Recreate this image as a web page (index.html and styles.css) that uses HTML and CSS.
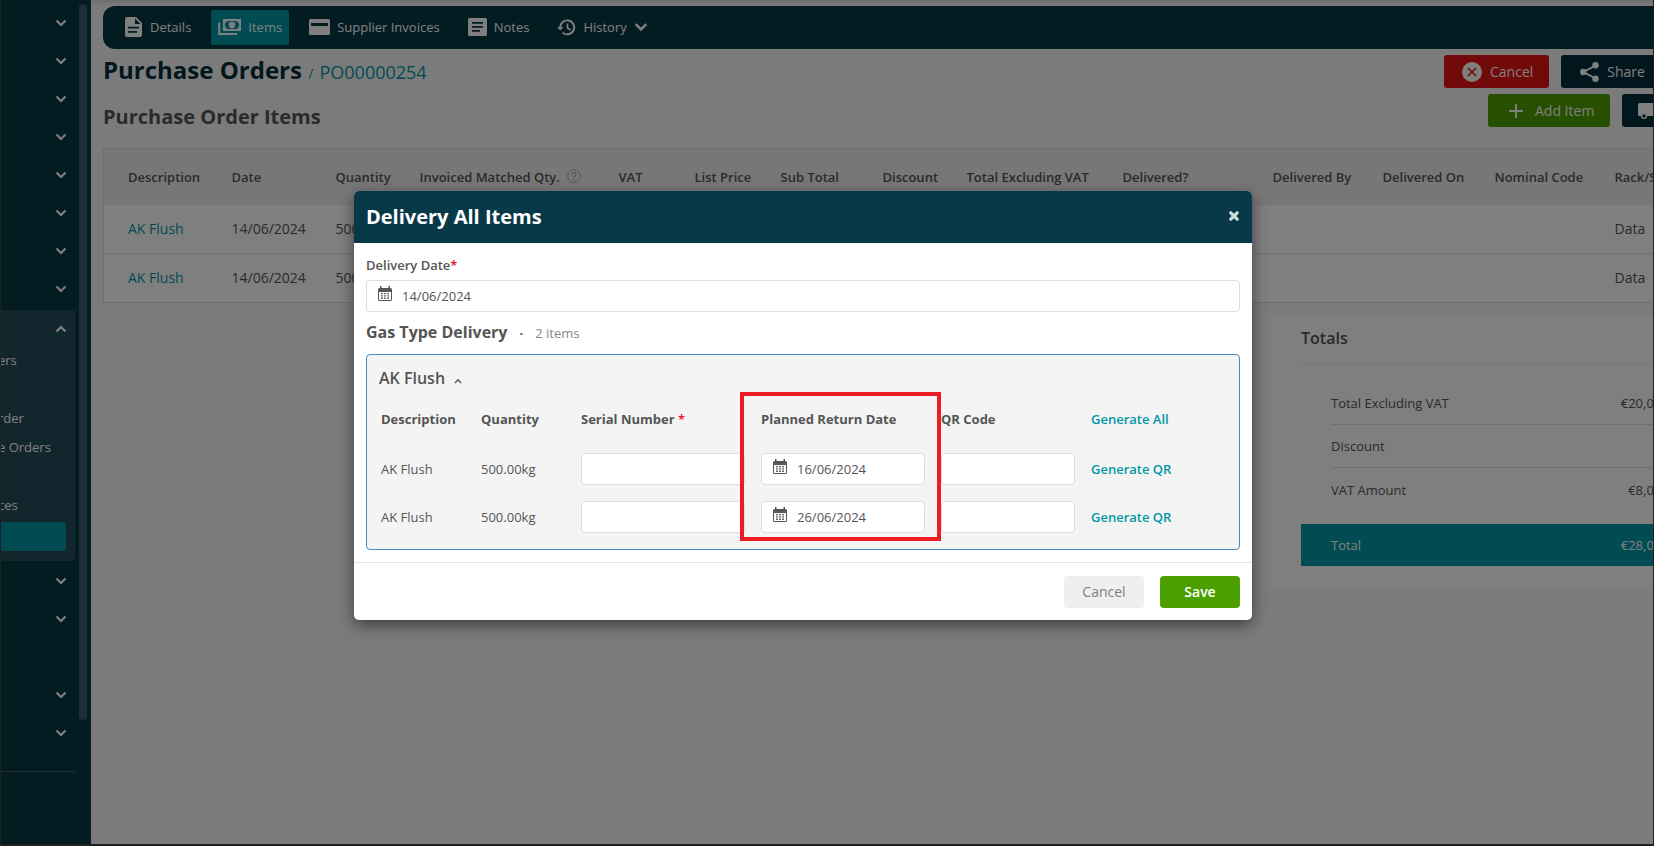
FILE: index.html
```html
<!DOCTYPE html>
<html lang="en">
<head>
<meta charset="utf-8">
<title>Purchase Orders</title>
<link rel="stylesheet" href="styles.css">
</head>
<body>
<svg class="defs" aria-hidden="true">
  <symbol id="chev" viewBox="0 0 12 8"><path d="M1.500 1.500 6 6l4.500-4.500" fill="none" stroke="currentColor" stroke-width="2.200"/></symbol>
  <symbol id="cal" viewBox="0 0 14 16"><path fill="currentColor" fill-rule="evenodd" d="M2 0h1.500v2h7V0H12v2h.5A1.500 1.500 0 0 1 14 3.500v10a1.500 1.500 0 0 1-1.500 1.500h-11A1.500 1.500 0 0 1 0 13.500v-10A1.500 1.500 0 0 1 1.500 2H2zM1 6v8h12V6z"/><path fill="currentColor" d="M3 7h1.800v1.300H3zM6.100 7h1.800v1.300H6.100zM9.200 7H11v1.300H9.200zM3 9.300h1.800v1.300H3zM6.100 9.300h1.800v1.300H6.100zM9.200 9.300H11v1.300H9.200zM3 11.600h1.800v1.300H3zM6.100 11.600h1.800v1.300H6.100zM9.200 11.600H11v1.300H9.200z"/></symbol>
</svg>
<div class="app">
  <nav class="sidebar" aria-label="Main menu">
    <div class="menu">
      <button class="menu-row" aria-label="Section 1"><svg class="chev"><use href="#chev"/></svg></button>
      <button class="menu-row" aria-label="Section 2"><svg class="chev"><use href="#chev"/></svg></button>
      <button class="menu-row" aria-label="Section 3"><svg class="chev"><use href="#chev"/></svg></button>
      <button class="menu-row" aria-label="Section 4"><svg class="chev"><use href="#chev"/></svg></button>
      <button class="menu-row" aria-label="Section 5"><svg class="chev"><use href="#chev"/></svg></button>
      <button class="menu-row" aria-label="Section 6"><svg class="chev"><use href="#chev"/></svg></button>
      <button class="menu-row" aria-label="Section 7"><svg class="chev"><use href="#chev"/></svg></button>
      <button class="menu-row" aria-label="Section 8"><svg class="chev"><use href="#chev"/></svg></button>
      <div class="menu-group">
        <button class="menu-row" aria-label="Section 9"><svg class="chev up"><use href="#chev"/></svg></button>
        <ul class="submenu">
          <li><a href="#">ers</a></li>
          <li></li>
          <li><a href="#">rder</a></li>
          <li><a href="#">e Orders</a></li>
          <li></li>
          <li><a href="#">ces</a></li>
          <li class="current"></li>
        </ul>
      </div>
      <button class="menu-row" aria-label="Section 10"><svg class="chev"><use href="#chev"/></svg></button>
      <button class="menu-row" aria-label="Section 11"><svg class="chev"><use href="#chev"/></svg></button>
      <div class="menu-row"></div>
      <button class="menu-row" aria-label="Section 12"><svg class="chev"><use href="#chev"/></svg></button>
      <button class="menu-row" aria-label="Section 13"><svg class="chev"><use href="#chev"/></svg></button>
      <hr class="menu-rule">
    </div>
    <div class="scroll-thumb"></div>
  </nav>

  <main class="main">
    <nav class="tabs" aria-label="Order sections">
      <a class="tab" href="#"><svg width="18" height="20" viewBox="0 0 18 20"><path fill="currentColor" fill-rule="evenodd" d="M2 0h9l6 6v12a2 2 0 0 1-2 2H2a2 2 0 0 1-2-2V2a2 2 0 0 1 2-2zM10 1.500V7h5.500zM3 9.700v1.800h11V9.700zM3 14v1.800h9V14z"/></svg>Details</a>
      <a class="tab active" href="#"><svg width="24" height="18" viewBox="0 0 24 18"><path fill="currentColor" fill-rule="evenodd" d="M5 1h18v12H5zM9 3a2.500 2.500 0 0 1-2 2v4a2.500 2.500 0 0 1 2 2h10a2.500 2.500 0 0 1 2-2V5a2.500 2.500 0 0 1-2-2z"/><circle cx="14" cy="7" r="3.200" fill="currentColor"/><path d="M1.200 4.500V16H19" fill="none" stroke="currentColor" stroke-width="2"/></svg>Items</a>
      <a class="tab" href="#"><svg width="21" height="16" viewBox="0 0 21 16"><path fill="currentColor" fill-rule="evenodd" d="M1.500 0h18A1.500 1.500 0 0 1 21 1.500v13a1.500 1.500 0 0 1-1.500 1.500h-18A1.500 1.500 0 0 1 0 14.500v-13A1.500 1.500 0 0 1 1.500 0zM2 4v3h17V4z"/></svg>Supplier Invoices</a>
      <a class="tab" href="#"><svg width="19" height="18" viewBox="0 0 19 18"><path fill="currentColor" fill-rule="evenodd" d="M1.500 0h16A1.500 1.500 0 0 1 19 1.500v15a1.500 1.500 0 0 1-1.500 1.500h-16A1.500 1.500 0 0 1 0 16.500v-15A1.500 1.500 0 0 1 1.500 0zM4 4v1.800h11V4zM4 8v1.800h11V8zM4 12v1.800h8V12z"/></svg>Notes</a>
      <a class="tab" href="#"><svg width="19" height="17" viewBox="0 0 19 17"><path d="M3.200 9A7 7 0 1 1 5.500 13.600" fill="none" stroke="currentColor" stroke-width="1.900"/><path d="M0 8h6.400L3.200 11.500z" fill="currentColor"/><path d="M10.500 4.500V9l3.200 2" fill="none" stroke="currentColor" stroke-width="1.600"/></svg>History<svg class="tab-chev"><use href="#chev"/></svg></a>
    </nav>

    <header class="title-row">
      <h1 class="title">Purchase Orders <span class="slash">/</span> <a href="#">PO00000254</a></h1>
      <div class="actions">
        <button class="btn danger"><svg width="20" height="20" viewBox="0 0 20 20"><path fill="currentColor" fill-rule="evenodd" d="M10 0a10 10 0 1 1 0 20 10 10 0 0 1 0-20zM6.300 5.200 5.200 6.300 8.900 10l-3.700 3.700 1.100 1.100L10 11.100l3.700 3.700 1.100-1.100L11.100 10l3.700-3.700-1.100-1.100L10 8.900z"/></svg>Cancel</button>
        <button class="btn dark"><svg width="20" height="20" viewBox="0 0 20 20"><path d="M16.500 3.500 4.500 10l12 6.500" fill="none" stroke="currentColor" stroke-width="1.900"/><g fill="currentColor"><circle cx="16.500" cy="3.300" r="3.200"/><circle cx="4.300" cy="10" r="3.200"/><circle cx="16.500" cy="16.700" r="3.200"/></g></svg>Share</button>
      </div>
    </header>
    <div class="title-row">
      <h2 class="subtitle">Purchase Order Items</h2>
      <div class="actions narrow">
        <button class="btn success"><svg width="16" height="16" viewBox="0 0 16 16"><path d="M8 1v14M1 8h14" stroke="currentColor" stroke-width="2"/></svg>Add Item</button>
        <button class="btn dark truck" aria-label="Deliver"><svg width="24" height="18" viewBox="0 0 24 18"><path fill="currentColor" d="M1.500 1H16v3h4l4 5v5H1.500A1.500 1.500 0 0 1 0 12.500v-10A1.500 1.500 0 0 1 1.500 1z"/><circle cx="6" cy="14" r="2.400" fill="#042e3b" stroke="currentColor" stroke-width="1.400"/><circle cx="19" cy="14" r="2.400" fill="#042e3b" stroke="currentColor" stroke-width="1.400"/></svg></button>
      </div>
    </div>

    <table class="items">
      <colgroup><col class="w104"><col class="w104"><col class="w84"><col class="w199"><col class="w76"><col class="w86"><col class="w102"><col class="w84"><col class="w156"><col class="w150"><col class="w110"><col class="w112"><col class="w120"><col class="w104"></colgroup>
      <thead><tr><th>Description</th><th>Date</th><th>Quantity</th><th>Invoiced Matched Qty.<svg class="help" viewBox="0 0 14 14"><circle cx="7" cy="7" r="6.300" fill="none" stroke="currentColor"/><path d="M5 5.500a2 2 0 1 1 2.900 1.800q-.9.500-.9 1.400M7 9.800v1.300" fill="none" stroke="currentColor" stroke-width="1.200"/></svg></th><th>VAT</th><th>List Price</th><th>Sub Total</th><th>Discount</th><th>Total Excluding VAT</th><th>Delivered?</th><th>Delivered By</th><th>Delivered On</th><th>Nominal Code</th><th>Rack/Shelf</th></tr></thead>
      <tbody>
        <tr><td><a href="#">AK Flush</a></td><td>14/06/2024</td><td>500.00</td><td></td><td></td><td></td><td></td><td></td><td></td><td></td><td></td><td></td><td></td><td>Data</td></tr>
        <tr><td><a href="#">AK Flush</a></td><td>14/06/2024</td><td>500.00</td><td></td><td></td><td></td><td></td><td></td><td></td><td></td><td></td><td></td><td></td><td>Data</td></tr>
      </tbody>
    </table>

    <section class="totals">
      <h3>Totals</h3>
      <dl>
        <div class="sum"><dt>Total Excluding VAT</dt><dd>€20,000.00</dd></div>
        <div class="sum"><dt>Discount</dt><dd></dd></div>
        <div class="sum"><dt>VAT Amount</dt><dd>€8,000.00</dd></div>
        <div class="grand"><dt>Total</dt><dd>€28,000.00</dd></div>
      </dl>
    </section>
  </main>

  <div class="overlay">
    <form class="modal" role="dialog" aria-labelledby="dlg-title">
      <header class="modal-head">
        <h2 id="dlg-title">Delivery All Items</h2>
        <button type="button" class="close" aria-label="Close"><svg width="12" height="12" viewBox="0 0 12 12"><path d="M2.800 2.800l6.400 6.400M9.200 2.800 2.800 9.200" stroke="currentColor" stroke-width="3.200" stroke-linecap="round"/></svg></button>
      </header>
      <div class="modal-body">
        <label class="label" for="ddate">Delivery Date<span class="req">*</span></label>
        <div class="date"><svg class="cal"><use href="#cal"/></svg><input id="ddate" type="text" value="14/06/2024"></div>
        <div class="group-head"><h3>Gas Type Delivery</h3><span class="dot">·</span><span class="count">2 items</span></div>
        <section class="panel">
          <h4>AK Flush<svg class="mini" viewBox="0 0 8 6"><path d="M1 5 4 1.800 7 5" fill="none" stroke="currentColor" stroke-width="1.300"/></svg></h4>
          <table class="lines">
            <colgroup><col class="w100"><col class="w100"><col class="w180"><col class="w180"><col class="w150"><col></colgroup>
            <thead><tr><th>Description</th><th>Quantity</th><th>Serial Number <span class="req">*</span></th><th>Planned Return Date</th><th>QR Code</th><th><a href="#">Generate All</a></th></tr></thead>
            <tbody>
              <tr><td>AK Flush</td><td>500.00kg</td><td><input class="box" type="text" aria-label="Serial Number 1"></td><td><div class="date"><svg class="cal"><use href="#cal"/></svg><input type="text" value="16/06/2024" aria-label="Planned Return Date 1"></div></td><td><input class="box" type="text" aria-label="QR Code 1"></td><td><a href="#">Generate QR</a></td></tr>
              <tr><td>AK Flush</td><td>500.00kg</td><td><input class="box" type="text" aria-label="Serial Number 2"></td><td><div class="date"><svg class="cal"><use href="#cal"/></svg><input type="text" value="26/06/2024" aria-label="Planned Return Date 2"></div></td><td><input class="box" type="text" aria-label="QR Code 2"></td><td><a href="#">Generate QR</a></td></tr>
            </tbody>
          </table>
          <div class="highlight"></div>
        </section>
      </div>
      <footer class="modal-foot">
        <button type="button" class="foot-btn plain">Cancel</button>
        <button type="submit" class="foot-btn save">Save</button>
      </footer>
    </form>
  </div>
</div>
</body>
</html>
```
FILE: styles.css
```css
* { box-sizing: border-box; }
body {
  margin: 0;
  font-family: "Open Sans", "Noto Sans", sans-serif;
  font-size: 14px;
  line-height: 20px;
  color: #555;
}
h1, h2, h3, h4, dl, dd, ul { margin: 0; padding: 0; }
button, input { font: inherit; color: inherit; }
button { border: 0; padding: 0; background: none; cursor: pointer; }
a { color: #0098a4; text-decoration: none; }
table { border-collapse: collapse; table-layout: fixed; }
th, td { padding: 0; text-align: left; }
.defs { position: absolute; width: 0; height: 0; }

.app {
  position: relative;
  display: flex;
  height: 100vh;
  overflow: hidden;
  border: 1px solid #231f20;
  border-width: 0 1px 2px;
  background: #f7f7f7;
}

/* Sidebar */
.sidebar {
  display: flex;
  gap: 4px;
  flex: 0 0 90px;
  padding-top: 4px;
  background: #053845;
  overflow: hidden;
}
.menu { flex: 0 0 74px; color: #fff; }
.menu-row {
  display: flex;
  align-items: center;
  justify-content: flex-end;
  width: 100%;
  height: 38px;
  padding-right: 8px;
}
.chev { width: 12px; height: 8px; }
.up { transform: rotate(180deg); }
.menu-group {
  margin: 2px 0 1px;
  padding-bottom: 10px;
  border-radius: 0 3px 3px 0;
  background: #224e5a;
}
.submenu { list-style: none; }
.submenu li { height: 29px; font-size: 13px; line-height: 25px; }
.submenu a { margin-left: -3px; color: #fff; font-weight: 500; white-space: nowrap; }
.submenu .current { margin-right: 9px; border-radius: 0 3px 3px 0; background: #0098a4; }
.menu-rule { height: 1px; margin: 19px 0 0; border: 0; background: #3a5e6a; }
.scroll-thumb { width: 8px; height: 716px; border-radius: 4px; background: #3a5e6a; }

/* Page */
.main { flex: 1; min-width: 0; padding: 6px 0 0 12px; overflow: hidden; background: linear-gradient(#dedede, #f7f7f7 6px); }
.tabs {
  display: flex;
  align-items: center;
  height: 43px;
  padding: 0 0 1px 14px;
  border-radius: 12px 0 0 12px;
  background: #053845;
}
.tab {
  display: flex;
  align-items: center;
  gap: 7px;
  height: 35px;
  margin-right: 12px;
  padding: 0 8px;
  border-radius: 2px;
  color: #fff;
  font-size: 13px;
}
.tab.active { gap: 6px; padding: 0 7px; background: #0098a4; }
.tab-chev { width: 14px; height: 10px; }

.title-row { display: flex; align-items: center; justify-content: space-between; height: 39px; margin-top: 3px; }
.title-row + .title-row { margin-top: 0; }
.title { padding-top: 1px; color: #042e3b; font-size: 24px; line-height: 32px; font-weight: 700; }
.title a { font-size: 18px; font-weight: 500; }
.slash { color: #0098a4; font-size: 14px; font-weight: 400; }
.subtitle { font-size: 20px; line-height: 28px; font-weight: 700; padding-top: 13px; }
.actions { display: flex; gap: 12px; flex: 0 0 209px; min-width: 0; }
.actions.narrow { flex-basis: 165px; }
.btn {
  display: flex;
  flex: none;
  align-items: center;
  gap: 8px;
  height: 33px;
  padding: 0 16px 0 18px;
  border-radius: 3px;
  color: #fff;
}
.danger { background: #e41414; }
.dark { background: #042e3b; }
.success { background: #4c9f00; gap: 11px; padding-left: 20px; }
.truck { padding-left: 16px; }

.items { width: 1591px; margin-top: 18px; border: 1px solid #dedede; background: #fff; }
.items thead { background: #efefef; }
.items th { height: 56px; padding-left: 24px; font-size: 13px; font-weight: 600; white-space: nowrap; }
.items td { height: 49px; padding-left: 24px; border-bottom: 1px solid #dedede; }
.help { width: 14px; height: 14px; margin-left: 7px; vertical-align: -1px; color: #aaa; }
.w76 { width: 76px; } .w84 { width: 84px; } .w86 { width: 86px; } .w100 { width: 100px; }
.w102 { width: 102px; } .w104 { width: 104px; } .w110 { width: 110px; } .w112 { width: 112px; }
.w120 { width: 120px; } .w150 { width: 150px; } .w156 { width: 156px; } .w180 { width: 180px; } .w199 { width: 199px; }

.totals {
  width: 480px;
  margin: 12px -96px 0 auto;
  padding: 0 32px 24px;
  border-radius: 12px;
  background: #fff;
  font-size: 13px;
}
.totals h3 { padding: 13px 0 14px; margin-bottom: 18px; border-bottom: 1px solid #f0f0f0; font-size: 16px; line-height: 21px; font-weight: 600; }
.sum, .grand { display: flex; justify-content: space-between; align-items: center; }
.sum { height: 43px; margin: 0 30px; border-bottom: 1px solid #dedede; }
.sum:nth-child(3) { border: 0; margin-bottom: 13px; }
.grand { height: 42px; padding: 0 30px; background: #0098a4; color: #fff; }

/* Dialog */
.overlay {
  position: absolute;
  inset: 0;
  display: flex;
  justify-content: center;
  align-items: flex-start;
  padding: 191px 48px 0 0;
  background: rgba(0, 0, 0, .5);
}
.modal { width: 898px; border-radius: 5px; overflow: hidden; background: #fff; box-shadow: 0 5px 15px rgba(0, 0, 0, .5); }
.modal-head { display: flex; align-items: center; justify-content: space-between; height: 52px; padding: 0 12px; background: #083948; color: #fff; }
.modal-head h2 { font-size: 20px; line-height: 28px; font-weight: 700; }
.close { display: flex; width: 12px; margin-bottom: 2px; color: #d0dde0; }
.modal-body { padding: 12px; font-size: 13px; }
.label { display: block; font-weight: 600; margin-bottom: 5px; }
.req { color: #e8141c; font-weight: 600; }
.date, .box { width: 100%; height: 32px; border: 1px solid #dedede; border-radius: 4px; background: #fff; }
.date { display: flex; align-items: center; gap: 10px; padding: 0 11px; }
.date input { flex: 1; min-width: 0; border: 0; padding: 0; outline: 0; background: none; }
.cal { flex: none; width: 14px; height: 16px; margin-bottom: 4px; }
.group-head { display: flex; align-items: baseline; height: 42px; padding-top: 8px; }
.group-head h3 { font-size: 16px; line-height: 24px; font-weight: 700; }
.dot { margin: 0 12px; font-weight: 700; }
.count { color: #888; }
.panel { position: relative; padding: 11px 14px; border: 1px solid #428bca; border-radius: 4px; background: #f4f4f4; height: 196px; }
.panel h4 { margin-left: -2px; font-size: 16px; line-height: 24px; font-weight: 600; }
.mini { width: 8px; height: 6px; margin-left: 9px; }
.lines { width: 100%; margin-top: 1px; }
.lines th { height: 54px; padding-top: 2px; font-weight: 700; }
.lines td { height: 48px; padding: 0 16px 0 0; }
.lines a { font-weight: 600; }
.lines td .box, .lines td .date { display: flex; }
.highlight { position: absolute; left: 373px; top: 37px; width: 201px; height: 149px; border: 4px solid #ec1c24; pointer-events: none; }
.modal-foot { display: flex; justify-content: flex-end; gap: 16px; padding: 13px 12px 12px; border-top: 1px solid #e5e5e5; }
.foot-btn { width: 80px; height: 32px; border-radius: 4px; font-size: 14px; }
.plain { background: #efefef; color: #808080; }
.save { background: #4c9f00; color: #fff; font-weight: 600; }
```
